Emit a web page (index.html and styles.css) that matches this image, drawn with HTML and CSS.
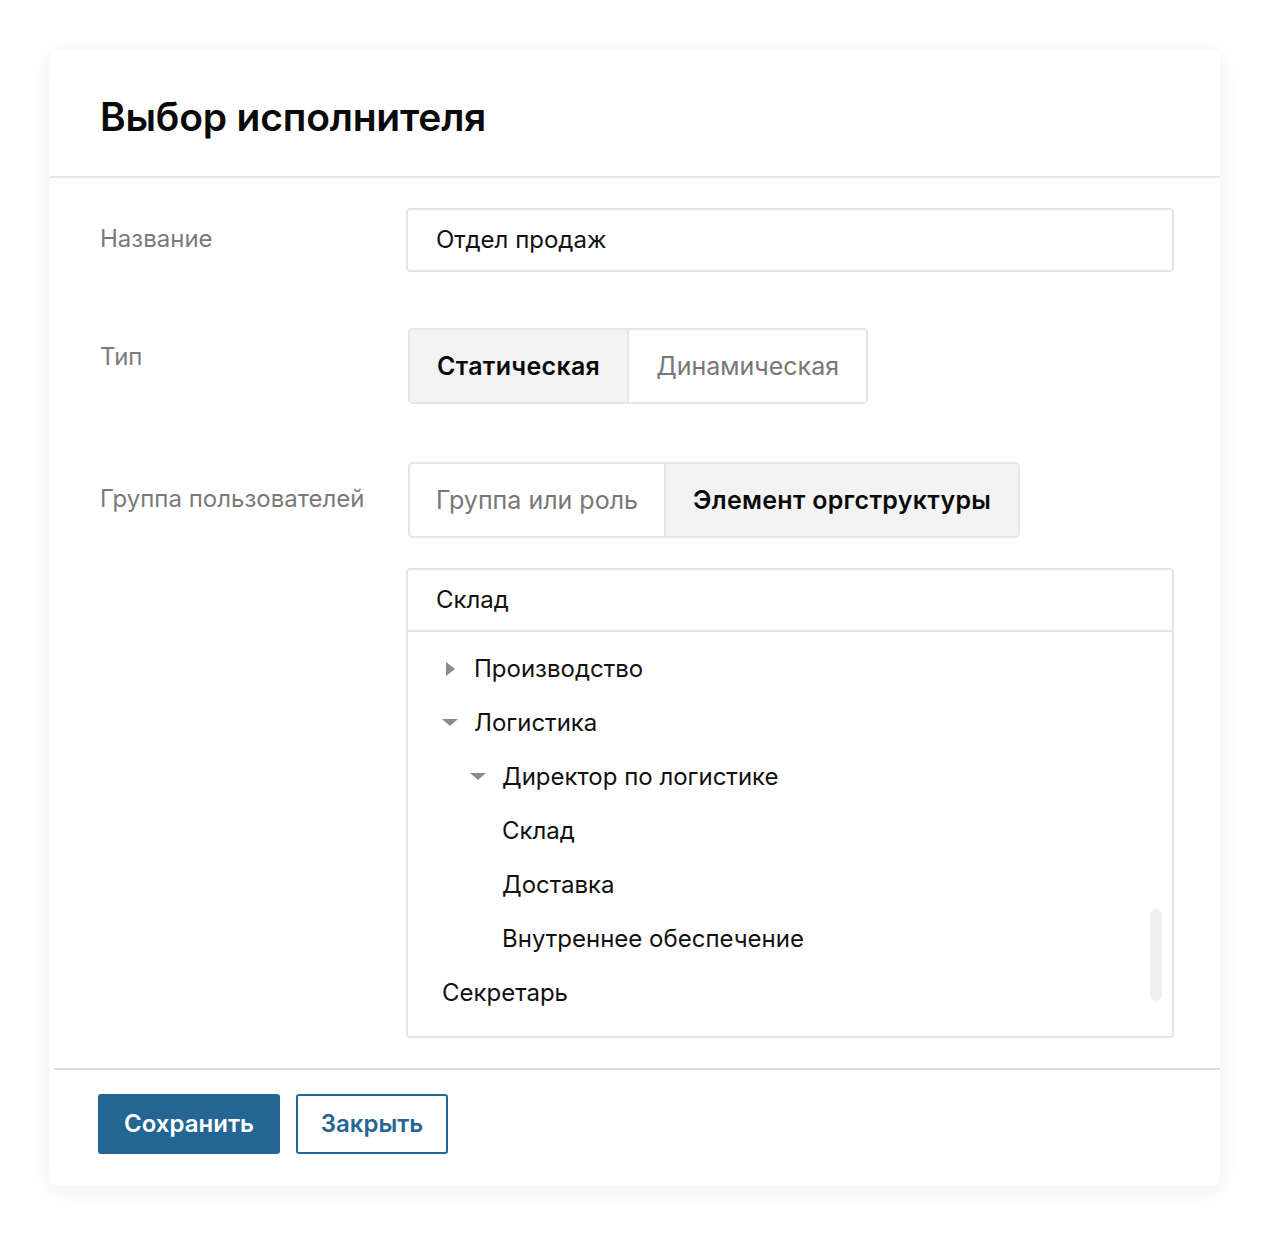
FILE: index.html
```html
<!DOCTYPE html>
<html lang="ru">
<head>
<meta charset="utf-8">
<link rel="stylesheet" href="styles.css">
</head>
<body>
<div class="card">
  <div class="header"><h1 class="title">Выбор исполнителя</h1></div>
  <div class="body">
    <div class="row">
      <div class="label label-input">Название</div>
      <div class="input">Отдел продаж</div>
    </div>
    <div class="row row-type">
      <div class="label label-type">Тип</div>
      <div class="seg">
        <div class="seg-btn active">Статическая</div>
        <div class="seg-btn">Динамическая</div>
      </div>
    </div>
    <div class="row row-group">
      <div class="label label-group">Группа пользователей</div>
      <div class="group-col">
        <div class="seg">
          <div class="seg-btn narrow">Группа или роль</div>
          <div class="seg-btn active">Элемент оргструктуры</div>
        </div>
        <div class="tree-box">
          <div class="tree-search">Склад</div>
          <div class="tree">
            <div class="node lvl1"><svg class="caret" width="16" height="16" viewBox="0 0 16 16"><path d="M4 1 L13 8 L4 15 Z" fill="#8a8a8a"/></svg><span>Производство</span></div>
            <div class="node lvl1"><svg class="caret" width="16" height="16" viewBox="0 0 16 16"><path d="M0 4 L16 4 L8 11 Z" fill="#8a8a8a"/></svg><span>Логистика</span></div>
            <div class="node lvl2"><svg class="caret" width="16" height="16" viewBox="0 0 16 16"><path d="M0 4 L16 4 L8 11 Z" fill="#8a8a8a"/></svg><span>Директор по логистике</span></div>
            <div class="node lvl3"><span>Склад</span></div>
            <div class="node lvl3"><span>Доставка</span></div>
            <div class="node lvl3"><span>Внутреннее обеспечение</span></div>
            <div class="node lvl0"><span>Секретарь</span></div>
            <div class="scrollbar"></div>
          </div>
        </div>
      </div>
    </div>
  </div>
  <div class="footer">
    <button class="btn btn-primary">Сохранить</button>
    <button class="btn btn-secondary">Закрыть</button>
  </div>
</div>
</body>
</html>
```

FILE: styles.css
```css
* { box-sizing: border-box; }
html, body { margin: 0; padding: 0; background: #fff; }
body {
  font-family: Inter, "Noto Sans", "Liberation Sans", sans-serif;
  color: #111;
  padding: 50px 48px 48px 50px;
}
.card {
  width: 1170px;
  height: 1136px;
  background: #fff;
  border-radius: 8px;
  box-shadow: 0 4px 24px rgba(0,0,0,0.07);
  display: flex;
  flex-direction: column;
}
.header {
  height: 128px;
  border-bottom: 2px solid #e6e6e6;
  padding-left: 50px;
  display: flex;
  align-items: center;
}
.title {
  margin: 0;
  font-size: 39px;
  font-weight: 600;
  letter-spacing: -0.2px;
  color: #0a0a0a;
  padding-top: 6px;
}
.body {
  padding: 30px 46px 30px 50px;
  display: flex;
  flex-direction: column;
}
.row {
  display: grid;
  grid-template-columns: 306px 1fr;
  align-items: start;
  justify-items: start;
}
.row-type { margin-top: 56px; }
.row-group { margin-top: 58px; }
.label {
  font-size: 24px;
  line-height: 30px;
  color: #7a7a7a;
}
.label-input { padding-top: 16px; }
.label-type { padding-top: 14px; }
.label-group { padding-top: 22px; }
.input {
  justify-self: stretch;
  height: 64px;
  border: 2px solid #e5e5e5;
  border-radius: 4px;
  padding: 0 28px 2px;
  display: flex;
  align-items: center;
  font-size: 24px;
  color: #111;
}
.seg {
  display: inline-flex;
  border: 2px solid #e6e6e6;
  border-radius: 5px;
  height: 76px;
  margin-left: 2px;
  overflow: hidden;
}
.seg-btn {
  display: flex;
  align-items: center;
  padding: 0 27px;
  font-size: 25px;
  color: #777;
  background: #fff;
}
.seg-btn + .seg-btn { border-left: 2px solid #e6e6e6; }
.seg-btn.active {
  background: #f3f3f3;
  color: #0a0a0a;
  font-weight: 600;
  letter-spacing: 0.3px;
}
.seg-btn.narrow { padding: 0 26px; }
.group-col {
  display: flex;
  flex-direction: column;
  align-items: flex-start;
}
.tree-box {
  margin-top: 30px;
  width: 768px;
  height: 470px;
  border: 2px solid #e5e5e5;
  border-radius: 4px;
  display: flex;
  flex-direction: column;
}
.tree-search {
  height: 62px;
  border-bottom: 2px solid #e5e5e5;
  padding: 0 28px 2px;
  display: flex;
  align-items: center;
  font-size: 24px;
  flex-shrink: 0;
}
.tree {
  position: relative;
  padding-top: 10px;
  flex: 1;
}
.node {
  height: 54px;
  display: flex;
  align-items: center;
  font-size: 24px;
  color: #111;
  padding-bottom: 1px;
}
.caret { flex-shrink: 0; margin-right: 16px; }
.lvl1 { padding-left: 34px; }
.lvl2 { padding-left: 62px; }
.lvl3 { padding-left: 94px; }
.lvl0 { padding-left: 34px; }
.scrollbar {
  position: absolute;
  right: 10px;
  top: 277px;
  width: 12px;
  height: 92px;
  border-radius: 6px;
  background: #f0f0f0;
}
.footer {
  margin-left: 4px;
  border-top: 2px solid #dcdcdc;
  padding: 24px 0 0 44px;
  display: flex;
  gap: 16px;
}
.btn {
  height: 60px;
  border-radius: 3px;
  font-family: Inter, "Noto Sans", "Liberation Sans", sans-serif;
  font-size: 24px;
  font-weight: 600;
  cursor: pointer;
  padding-bottom: 2px;
}
.btn-primary {
  width: 182px;
  background: #236694;
  color: #fff;
  border: none;
}
.btn-secondary {
  width: 152px;
  background: #fff;
  color: #236694;
  border: 2px solid #236694;
}
```
